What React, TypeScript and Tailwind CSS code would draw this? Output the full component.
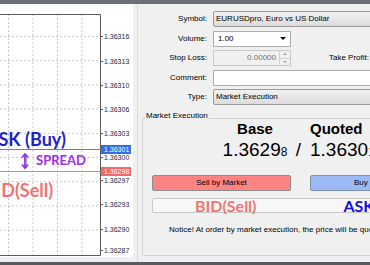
const gridY = [32, 56.2, 80.4, 104.6, 128.8, 153, 177.2, 201.4, 225.6];
const gridX = [8.5, 33, 57.5, 82];

const priceLabels: [number, string][] = [
  [32, '1.36316'],
  [57, '1.36313'],
  [81, '1.36310'],
  [105, '1.36306'],
  [129, '1.36303'],
  [153, '1.36300'],
  [176, '1.36297'],
  [200, '1.36293'],
  [225, '1.36290'],
  [246, '1.36287'],
];

function Chart() {
  return (
    <div className="relative w-[133px] h-[253px] bg-white overflow-hidden shrink-0">
      <svg width="133" height="253" className="block">
        {gridY.map((y) => (
          <line key={y} x1="0" x2="100" y1={y + 0.5} y2={y + 0.5} stroke="#c8c8c8" strokeDasharray="2 2" />
        ))}
        {gridX.map((x) => (
          <line key={x} x1={x} x2={x} y1="10" y2="251" stroke="#c8c8c8" strokeDasharray="2 2" />
        ))}
        <path d="M0 10.5 H100.5 V251.5 H0" fill="none" stroke="#5a5a5a" />
        <line x1="0" x2="101" y1="145.5" y2="145.5" stroke="#4b82e6" />
        <line x1="0" x2="101" y1="167.5" y2="167.5" stroke="#f07c7c" />
        {priceLabels.map(([y, t]) => (
          <g key={t}>
            <line x1="100" x2="103" y1={y + 0.5} y2={y + 0.5} stroke="#5a5a5a" />
            <text x="104" y={y + 2.5} fontSize="7" fill="#1b2745" fontFamily="Liberation Sans, sans-serif">
              {t}
            </text>
          </g>
        ))}
        <rect x="101" y="141" width="30" height="9" fill="#2f6fe6" />
        <text x="104" y="148" fontSize="7" fill="#ffffff" fontFamily="Liberation Sans, sans-serif">1.36301</text>
        <rect x="101" y="163" width="30" height="9" fill="#f36a6a" />
        <text x="104" y="170" fontSize="7" fill="#ffffff" fontFamily="Liberation Sans, sans-serif">1.36298</text>
      </svg>

      <div className="absolute left-[-14px] top-[126px] font-['Lato'] font-bold text-[18px] leading-[18px] text-[#1e22c8] whitespace-nowrap">
        ASK (Buy)
      </div>
      <svg className="absolute left-[20px] top-[149px]" width="10" height="17" viewBox="0 0 10 17">
        <path d="M6 2 L6 15" stroke="#bdbdbd" strokeWidth="2.5" />
        <path d="M5 1.5 L5 14.5 M2 4.5 L5 1 L8 4.5 M2 11.5 L5 15 L8 11.5" stroke="#9b2fe6" strokeWidth="1.8" fill="none" />
      </svg>
      <div className="absolute left-[36px] top-[150px] font-['Lato'] font-bold text-[13px] leading-[13px] text-[#9b2fe6]">
        SPREAD
      </div>
      <div className="absolute left-[-16px] top-[177px] font-['Lato'] font-bold text-[18px] leading-[18px] text-[#f07474] whitespace-nowrap">
        BID(Sell)
      </div>
    </div>
  );
}

function Row({ label, children }: { label: string; children: React.ReactNode }) {
  return (
    <div className="flex items-center h-[16px] whitespace-nowrap">
      <div className="w-[69px] shrink-0 text-right">{label}</div>
      <div className="ml-[6px] shrink-0 flex items-center h-full">{children}</div>
    </div>
  );
}

function OrderPanel() {
  return (
    <div className="flex-1 min-w-0 h-full border-l border-[#dadada] overflow-hidden text-[8px] leading-[10px] text-black">
      <div className="flex flex-col gap-[3.5px] pt-[7px]">
        <Row label="Symbol:">
          <div className="w-[180px] h-[16px] border border-[#9a9a9a] rounded-[2px] bg-gradient-to-b from-[#f2f2f2] to-[#dcdcdc] flex items-center pl-[2px]">
            EURUSDpro, Euro vs US Dollar
          </div>
        </Row>
        <Row label="Volume:">
          <div className="w-[78px] h-[16px] border border-[#abadb3] bg-white flex items-center justify-between pl-[4px] pr-[4px]">
            <span>1.00</span>
            <span className="w-0 h-0 border-l-[3px] border-r-[3px] border-t-[3px] border-l-transparent border-r-transparent border-t-black" />
          </div>
        </Row>
        <Row label="Stop Loss:">
          <div className="w-[78px] h-[16px] border border-[#c9c9c9] bg-[#f0f0f0] flex items-center">
            <span className="flex-1 text-right pr-[3px] text-[#707070]">0.00000</span>
            <div className="w-[11px] h-full flex flex-col border-l border-[#d2d2d2]">
              <div className="flex-1 flex items-center justify-center border-b border-[#d2d2d2]">
                <span className="w-0 h-0 border-l-[2px] border-r-[2px] border-b-[2px] border-l-transparent border-r-transparent border-b-[#a0a0a0]" />
              </div>
              <div className="flex-1 flex items-center justify-center">
                <span className="w-0 h-0 border-l-[2px] border-r-[2px] border-t-[2px] border-l-transparent border-r-transparent border-t-[#a0a0a0]" />
              </div>
            </div>
          </div>
          <span className="ml-[38px]">Take Profit:</span>
        </Row>
        <Row label="Comment:">
          <div className="w-[180px] h-[16px] border border-[#abadb3] bg-white" />
        </Row>
        <Row label="Type:">
          <div className="w-[180px] h-[16px] border border-[#9a9a9a] rounded-[2px] bg-gradient-to-b from-[#f2f2f2] to-[#dcdcdc] flex items-center pl-[2px]">
            Market Execution
          </div>
        </Row>
      </div>

      <fieldset className="ml-[4px] mt-[6px] w-[260px] h-[145px] border border-[#d3d3d3] rounded-[2px]">
        <legend className="ml-[2px] px-[1px] leading-[10px] pb-[4px]">Market Execution</legend>
        <div className="-mt-[4px] flex whitespace-nowrap">
          <div className="ml-[77px] w-[70px] shrink-0 flex flex-col items-center">
            <div className="font-bold text-[15px] leading-[16px]">Base</div>
            <div className="mt-[3px] text-[19px] leading-[20px]">
              1.3629<span className="text-[12px]">8</span>
            </div>
          </div>
          <div className="w-[17px] shrink-0 flex flex-col items-center">
            <div className="h-[16px]" />
            <div className="mt-[3px] text-[19px] leading-[20px]">/</div>
          </div>
          <div className="w-[80px] shrink-0 flex flex-col items-start pl-[3px]">
            <div className="font-bold text-[15px] leading-[16px]">Quoted</div>
            <div className="mt-[3px] text-[19px] leading-[20px]">
              1.3630<span className="text-[12px]">1</span>
            </div>
          </div>
        </div>

        <div className="mt-[13px] ml-[9px] flex gap-[19px]">
          <div className="w-[139px] h-[16px] shrink-0 border border-[#8c8c8c] rounded-[2px] bg-[#ff8383] flex items-center justify-center">
            Sell by Market
          </div>
          <div className="w-[139px] h-[16px] shrink-0 border border-[#7f8fb0] rounded-[2px] bg-[#9cb9f6] flex items-center justify-center">
            Buy by Market
          </div>
        </div>

        <div className="mt-[7px] ml-[9px] w-[300px] h-[15px] border border-[#c8c8c8] rounded-[2px] bg-[#f7f7f7] flex items-center font-['Lato'] font-bold text-[16px] leading-[15px] whitespace-nowrap">
          <span className="ml-[42px] text-[#f07474]">BID(Sell)</span>
          <span className="ml-[87px] text-[#1010e0]">ASK(Buy)</span>
        </div>

        <div className="mt-[12px] ml-[26px] whitespace-nowrap">
          Notice! At order by market execution, the price will be quoted by the dealer
        </div>
      </fieldset>
    </div>
  );
}

export default function App() {
  return (
    <div className="w-[370px] h-[265px] overflow-hidden flex flex-col bg-[#f0f0f0] font-['Liberation_Sans',sans-serif]">
      <div className="h-[4px] shrink-0 bg-[#6c7075]" />
      <div className="flex flex-1 min-h-0">
        <Chart />
        <div className="w-[4px] shrink-0" />
        <OrderPanel />
      </div>
      <div className="h-[3px] shrink-0 bg-[#575b60]" />
    </div>
  );
}
